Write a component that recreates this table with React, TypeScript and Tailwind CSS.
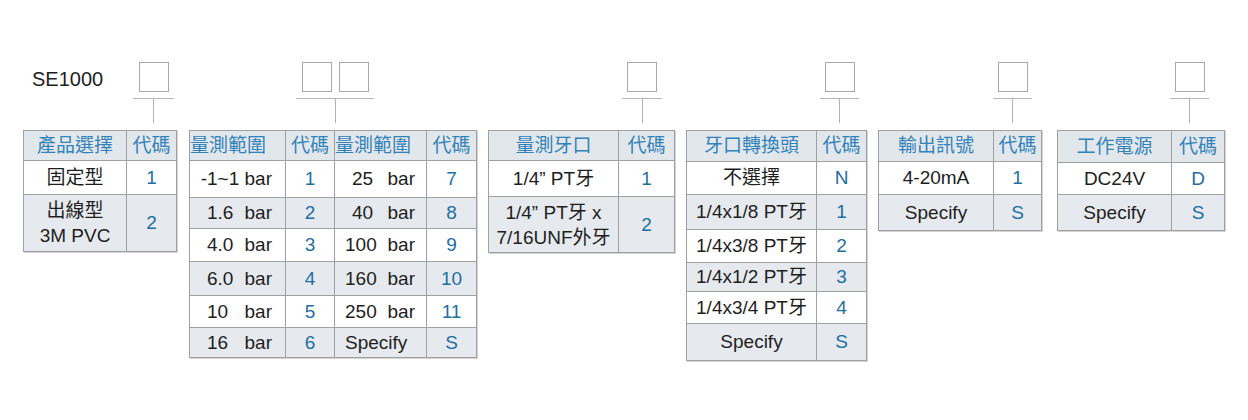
import type { ReactNode } from "react";

type Row = { h: string; cells: ReactNode[] };

const font = "font-['Liberation_Sans','Noto_Sans_CJK_TC',sans-serif]";

function Group({
  pos,
  boxes = 1,
  lead,
  children,
}: {
  pos: string;
  boxes?: number;
  lead?: ReactNode;
  children: ReactNode;
}) {
  return (
    <div className="flex flex-col">
      <div className="flex items-start">
        {lead}
        <div className={`flex flex-col items-center ${pos}`}>
          <div className="flex gap-[7px]">
            {Array.from({ length: boxes }).map((_, i) => (
              <div key={i} className="h-[30px] w-[30px] border border-[#a8a8a8]" />
            ))}
          </div>
          <div className="mt-[6px] h-px w-full bg-[#b4b4b4]" />
          <div className="h-[24px] w-px bg-[#b4b4b4]" />
        </div>
      </div>
      <div className="mt-[7px]">{children}</div>
    </div>
  );
}

function SpecTable({
  width,
  cols,
  head,
  headH,
  rows,
  codeCols,
}: {
  width: string;
  cols: string[];
  head: ReactNode[];
  headH: string;
  rows: Row[];
  codeCols: number[];
}) {
  return (
    <table className={`table-fixed border-collapse shadow-[1px_1px_0_#d4d4d4] ${width}`}>
      <colgroup>
        {cols.map((c, i) => (
          <col key={i} className={c} />
        ))}
      </colgroup>
      <thead>
        <tr className={`bg-[#e2e7ec] ${headH}`}>
          {head.map((h, i) => (
            <th
              key={i}
              className="border border-[#a0a0a0] p-0 text-center font-normal text-[#3383b9]"
            >
              {h}
            </th>
          ))}
        </tr>
      </thead>
      <tbody>
        {rows.map((r, ri) => (
          <tr key={ri} className={`${r.h} ${ri % 2 ? "bg-[#e6eaee]" : "bg-white"}`}>
            {r.cells.map((c, ci) => (
              <td
                key={ci}
                className={`border border-[#a0a0a0] p-0 text-center ${
                  codeCols.includes(ci) ? "text-[#1f6ea3]" : "text-[#1e1e1e]"
                }`}
              >
                {c}
              </td>
            ))}
          </tr>
        ))}
      </tbody>
    </table>
  );
}

const Bar1 = ({ n }: { n: string }) => (
  <div className="flex justify-between pl-[17px] pr-[13px]">
    <span>{n}</span>
    <span>bar</span>
  </div>
);

const Bar2 = ({ n, wide }: { n: string; wide?: boolean }) => (
  <div className={`flex justify-between pr-[11px] ${wide ? "pl-[10px]" : "pl-[17px]"}`}>
    <span>{n}</span>
    <span>bar</span>
  </div>
);

export default function App() {
  return (
    <div className={`min-h-screen w-[1248px] bg-white pl-[23px] pt-[62px] text-[19px] leading-[22px] ${font}`}>
      <div className="flex items-start">
        <Group
          pos="w-[41px]"
          lead={
            <div className="w-[110px] pl-[9px] pt-[7px] text-[20px] leading-[20px] text-[#1e1e1e]">
              SE1000
            </div>
          }
        >
          <SpecTable
            width="w-[153px]"
            cols={["w-[103px]", "w-[50px]"]}
            headH="h-[30px]"
            head={["產品選擇", "代碼"]}
            codeCols={[1]}
            rows={[
              { h: "h-[34px]", cells: ["固定型", "1"] },
              {
                h: "h-[57px]",
                cells: [
                  <div className="leading-[25px]">
                    出線型
                    <br />
                    3M PVC
                  </div>,
                  "2",
                ],
              },
            ]}
          />
        </Group>

        <div className="ml-[12px]">
          <Group pos="ml-[107px] w-[78px]" boxes={2}>
            <SpecTable
              width="w-[287px]"
              cols={["w-[96px]", "w-[49px]", "w-[92px]", "w-[50px]"]}
              headH="h-[30px]"
              head={[
                <div className="text-left">量測範圍</div>,
                "代碼",
                <div className="text-left">量測範圍</div>,
                "代碼",
              ]}
              codeCols={[1, 3]}
              rows={[
                {
                  h: "h-[37px]",
                  cells: [
                    <div className="pr-[13px] text-right">-1~1 bar</div>,
                    "1",
                    <Bar2 n="25" />,
                    "7",
                  ],
                },
                { h: "h-[31px]", cells: [<Bar1 n="1.6" />, "2", <Bar2 n="40" />, "8"] },
                { h: "h-[33px]", cells: [<Bar1 n="4.0" />, "3", <Bar2 n="100" wide />, "9"] },
                { h: "h-[34px]", cells: [<Bar1 n="6.0" />, "4", <Bar2 n="160" wide />, "10"] },
                { h: "h-[32px]", cells: [<Bar1 n="10" />, "5", <Bar2 n="250" wide />, "11"] },
                {
                  h: "h-[30px]",
                  cells: [<Bar1 n="16" />, "6", <div className="pl-[10px] text-left">Specify</div>, "S"],
                },
              ]}
            />
          </Group>
        </div>

        <div className="ml-[11px]">
          <Group pos="ml-[134px] w-[40px]">
            <SpecTable
              width="w-[186px]"
              cols={["w-[130px]", "w-[56px]"]}
              headH="h-[30px]"
              head={["量測牙口", "代碼"]}
              codeCols={[1]}
              rows={[
                { h: "h-[36px]", cells: ["1/4” PT牙", "1"] },
                {
                  h: "h-[56px]",
                  cells: [
                    <div className="leading-[25px]">
                      1/4” PT牙 x
                      <br />
                      7/16UNF外牙
                    </div>,
                    "2",
                  ],
                },
              ]}
            />
          </Group>
        </div>

        <div className="ml-[11px]">
          <Group pos="ml-[134px] w-[39px]">
            <SpecTable
              width="w-[180px]"
              cols={["w-[130px]", "w-[50px]"]}
              headH="h-[31px]"
              head={["牙口轉換頭", "代碼"]}
              codeCols={[1]}
              rows={[
                { h: "h-[33px]", cells: ["不選擇", "N"] },
                { h: "h-[35px]", cells: ["1/4x1/8 PT牙", "1"] },
                { h: "h-[33px]", cells: ["1/4x3/8 PT牙", "2"] },
                { h: "h-[29px]", cells: ["1/4x1/2 PT牙", "3"] },
                { h: "h-[32px]", cells: ["1/4x3/4 PT牙", "4"] },
                { h: "h-[37px]", cells: ["Specify", "S"] },
              ]}
            />
          </Group>
        </div>

        <div className="ml-[11px]">
          <Group pos="ml-[115px] w-[39px]">
            <SpecTable
              width="w-[163px]"
              cols={["w-[115px]", "w-[48px]"]}
              headH="h-[31px]"
              head={["輸出訊號", "代碼"]}
              codeCols={[1]}
              rows={[
                { h: "h-[33px]", cells: ["4-20mA", "1"] },
                { h: "h-[36px]", cells: ["Specify", "S"] },
              ]}
            />
          </Group>
        </div>

        <div className="ml-[15px]">
          <Group pos="ml-[113px] w-[39px]">
            <SpecTable
              width="w-[167px]"
              cols={["w-[114px]", "w-[53px]"]}
              headH="h-[32px]"
              head={["工作電源", "代碼"]}
              codeCols={[1]}
              rows={[
                { h: "h-[32px]", cells: ["DC24V", "D"] },
                { h: "h-[36px]", cells: ["Specify", "S"] },
              ]}
            />
          </Group>
        </div>
      </div>
    </div>
  );
}
